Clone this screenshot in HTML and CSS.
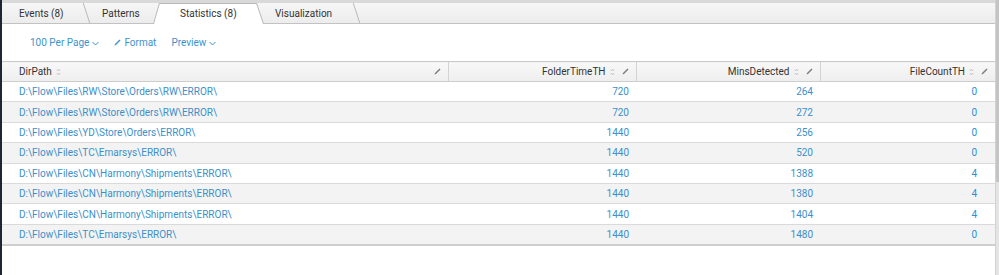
FILE: index.html
```html
<!DOCTYPE html>
<html lang="en">
<head>
  <meta charset="UTF-8" />
  <title>Statistics</title>
  <link rel="stylesheet" href="styles.css">
</head>
<body>
  <div class="page">
    <div class="main">
      <div class="tabs">
        <a class="tab tab-events">Events (8)</a>
        <a class="tab tab-patterns no-sep">Patterns</a>
        <a class="tab tab-stats active"><span>Statistics (8)</span></a>
        <a class="tab tab-vis">Visualization</a>
      </div>

      <div class="toolbar">
        <a class="tool">100 Per Page
          <svg class="chev" width="7" height="5" viewBox="0 0 7 5"><path d="M0.5 1 L3.5 4 L6.5 1" fill="none" stroke="currentColor" stroke-width="1"/></svg>
        </a>
        <a class="tool">
          <svg class="pen" width="7" height="7" viewBox="0 0 7 7"><path d="M0.5 6.5 L1 5 L5.5 0.5 L6.5 1.5 L2 6 Z" fill="currentColor"/></svg>Format
        </a>
        <a class="tool">Preview
          <svg class="chev" width="7" height="5" viewBox="0 0 7 5"><path d="M0.5 1 L3.5 4 L6.5 1" fill="none" stroke="currentColor" stroke-width="1"/></svg>
        </a>
      </div>

      <table class="results">
        <colgroup>
          <col class="c-path">
          <col class="c-folder">
          <col class="c-mins">
          <col>
        </colgroup>
        <thead>
          <tr>
            <th class="text-col"><div class="th-inner">DirPath
              <svg class="sort" width="5" height="8" viewBox="0 0 5 8"><path d="M0.8 3 L2.5 1.2 L4.2 3 M0.8 5 L2.5 6.8 L4.2 5" fill="none" stroke="#b5b5b5" stroke-width="0.9"/></svg>
              <svg class="edit" width="7" height="7" viewBox="0 0 7 7"><path d="M0.5 6.5 L1 5 L5.5 0.5 L6.5 1.5 L2 6 Z" fill="#7a7a7a"/></svg>
            </div></th>
            <th><div class="th-inner">FolderTimeTH
              <svg class="sort" width="5" height="8" viewBox="0 0 5 8"><path d="M0.8 3 L2.5 1.2 L4.2 3 M0.8 5 L2.5 6.8 L4.2 5" fill="none" stroke="#b5b5b5" stroke-width="0.9"/></svg>
              <svg class="edit" width="7" height="7" viewBox="0 0 7 7"><path d="M0.5 6.5 L1 5 L5.5 0.5 L6.5 1.5 L2 6 Z" fill="#7a7a7a"/></svg>
            </div></th>
            <th><div class="th-inner">MinsDetected
              <svg class="sort" width="5" height="8" viewBox="0 0 5 8"><path d="M0.8 3 L2.5 1.2 L4.2 3 M0.8 5 L2.5 6.8 L4.2 5" fill="none" stroke="#b5b5b5" stroke-width="0.9"/></svg>
              <svg class="edit" width="7" height="7" viewBox="0 0 7 7"><path d="M0.5 6.5 L1 5 L5.5 0.5 L6.5 1.5 L2 6 Z" fill="#7a7a7a"/></svg>
            </div></th>
            <th><div class="th-inner">FileCountTH
              <svg class="sort" width="5" height="8" viewBox="0 0 5 8"><path d="M0.8 3 L2.5 1.2 L4.2 3 M0.8 5 L2.5 6.8 L4.2 5" fill="none" stroke="#b5b5b5" stroke-width="0.9"/></svg>
              <svg class="edit" width="7" height="7" viewBox="0 0 7 7"><path d="M0.5 6.5 L1 5 L5.5 0.5 L6.5 1.5 L2 6 Z" fill="#7a7a7a"/></svg>
            </div></th>
          </tr>
        </thead>
        <tbody>
          <tr><td>D:\Flow\Files\RW\Store\Orders\RW\ERROR\</td><td class="num">720</td><td class="num">264</td><td class="num last">0</td></tr>
          <tr><td>D:\Flow\Files\RW\Store\Orders\RW\ERROR\</td><td class="num">720</td><td class="num">272</td><td class="num last">0</td></tr>
          <tr><td>D:\Flow\Files\YD\Store\Orders\ERROR\</td><td class="num">1440</td><td class="num">256</td><td class="num last">0</td></tr>
          <tr><td>D:\Flow\Files\TC\Emarsys\ERROR\</td><td class="num">1440</td><td class="num">520</td><td class="num last">0</td></tr>
          <tr><td>D:\Flow\Files\CN\Harmony\Shipments\ERROR\</td><td class="num">1440</td><td class="num">1388</td><td class="num last">4</td></tr>
          <tr><td>D:\Flow\Files\CN\Harmony\Shipments\ERROR\</td><td class="num">1440</td><td class="num">1380</td><td class="num last">4</td></tr>
          <tr><td>D:\Flow\Files\CN\Harmony\Shipments\ERROR\</td><td class="num">1440</td><td class="num">1404</td><td class="num last">4</td></tr>
          <tr><td>D:\Flow\Files\TC\Emarsys\ERROR\</td><td class="num">1440</td><td class="num">1480</td><td class="num last">0</td></tr>
        </tbody>
      </table>
    </div>
    <div class="scrollbar"><div class="thumb"></div></div>
  </div>
</body>
</html>
```

FILE: styles.css
```css
body {
  margin: 0;
  font-family: Roboto, "Liberation Sans", Arial, sans-serif;
  font-size: 10px;
  color: #333;
  background: #fff;
}
.page {
  display: flex;
  height: 275px;
  border-left: 2px solid #1d2733;
}
.main {
  flex: 1;
}
.scrollbar {
  width: 5px;
  background: #e4e4e4;
  border-left: 1px solid #d2d2d2;
}
.thumb {
  height: 182px;
  background: #c4c4c4;
}

/* tabs */
.tabs {
  display: flex;
  height: 20px;
  border-top: 3px solid #d9d9d9;
  border-bottom: 1px solid #c2c2c2;
  background: linear-gradient(#f6f6f6, #ececec);
}
.tab {
  position: relative;
  display: flex;
  align-items: center;
  box-sizing: border-box;
  color: #333;
  cursor: pointer;
}
.tab-events { width: 85px; padding-left: 17px; }
.tab-patterns { width: 70px; padding-left: 15px; }
.tab-stats { width: 103px; padding-left: 23px; }
.tab-vis { width: 97px; padding-left: 15px; }

.tab::after {
  content: '';
  position: absolute;
  top: 0;
  bottom: 0;
  right: 0;
  border-right: 1px solid #b9b9b9;
  transform: skewX(18deg);
}
.tab.no-sep::after {
  display: none;
}
.tab.active span {
  position: relative;
  z-index: 2;
}
.tab.active::before {
  content: '';
  position: absolute;
  top: 0;
  bottom: -1px;
  left: -4px;
  right: -4px;
  background: #b9b9b9;
  clip-path: polygon(6px 0, calc(100% - 7px) 0, 100% 100%, 0 100%);
  z-index: 1;
}
.tab.active::after {
  top: 1px;
  bottom: -1px;
  left: -3px;
  right: -3px;
  border: none;
  transform: none;
  background: #fff;
  clip-path: polygon(5.7px 0, calc(100% - 6.7px) 0, 100% 100%, 0 100%);
  z-index: 1;
}

/* toolbar */
.toolbar {
  display: flex;
  align-items: center;
  height: 37px;
  padding-left: 28px;
}
.tool {
  display: flex;
  align-items: center;
  color: #3c93cc;
  margin-right: 15px;
  cursor: pointer;
}
.chev {
  margin-left: 3px;
  margin-top: 1px;
}
.pen {
  margin-right: 3px;
}

/* table */
.results {
  width: 993px;
  border-collapse: collapse;
  table-layout: fixed;
}
.c-path { width: 446px; }
.c-folder { width: 188px; }
.c-mins { width: 184px; }

.results th {
  height: 19px;
  padding: 0 6px 0 17px;
  font-weight: normal;
  color: #333;
  background: linear-gradient(#f8f8f8, #eeeeee);
  border-top: 1px solid #c9c9c9;
  border-bottom: 1px solid #cdcdcd;
  border-left: 1px solid #d3d3d3;
}
.results th.text-col {
  border-left: none;
}
.th-inner {
  display: flex;
  align-items: center;
  justify-content: flex-end;
}
.text-col .th-inner {
  justify-content: flex-start;
}
.text-col .edit {
  margin-left: auto;
}
.sort {
  margin-left: 4px;
}
.edit {
  margin-left: 7px;
  margin-right: 1px;
}
.results td {
  height: 19.4px;
  padding: 0 7px 0 17px;
  color: #3c8fca;
  border-bottom: 1px solid #dadada;
  white-space: nowrap;
}
.results tbody tr:nth-child(even) td {
  background: #f3f3f3;
}
.results tbody tr:last-child td {
  border-bottom: 2px solid #cfcfcf;
}
.results td.num {
  text-align: right;
}
.results td.last {
  padding-right: 18px;
  color: #2791d6;
}
```
